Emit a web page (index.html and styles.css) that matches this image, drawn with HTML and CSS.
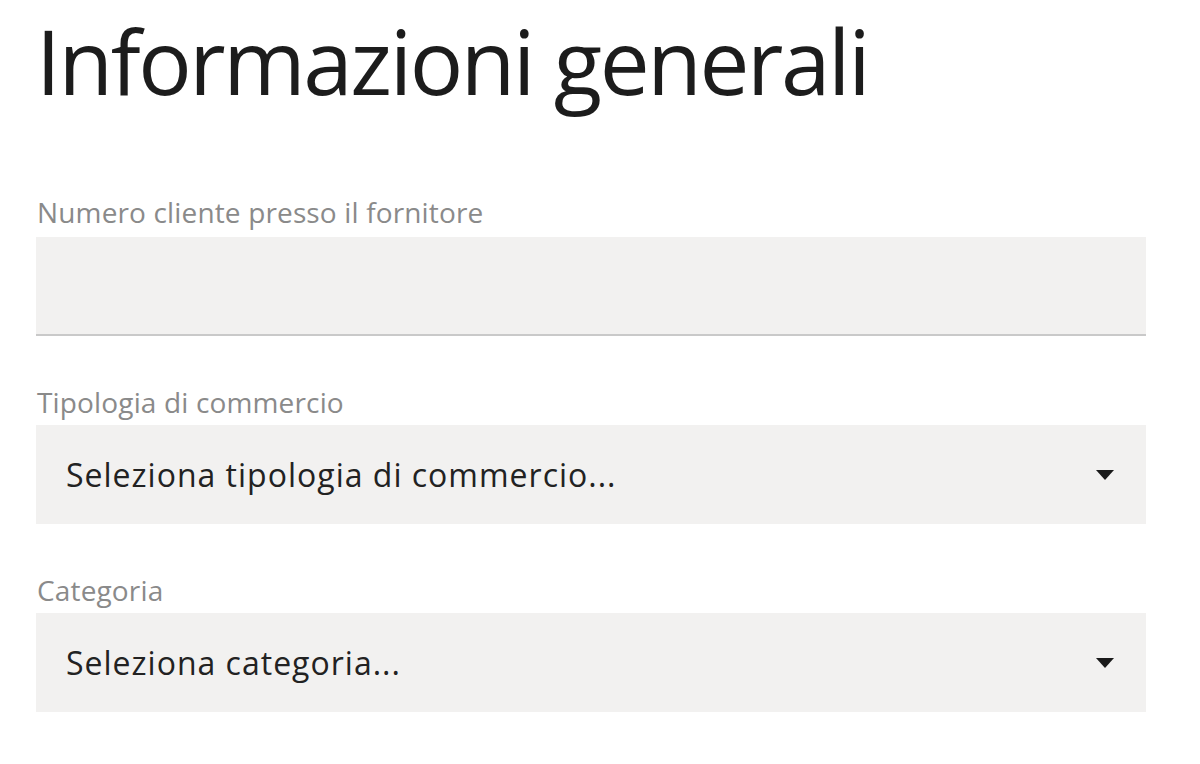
FILE: index.html
```html
<!DOCTYPE html>
<html lang="it">
<head>
<meta charset="utf-8">
<title>Informazioni generali</title>
<link rel="stylesheet" href="styles.css">
</head>
<body>
<main class="page">
  <h1 class="title">Informazioni generali</h1>
  <div class="field field-first">
    <label class="label">Numero cliente presso il fornitore</label>
    <div class="input"></div>
  </div>
  <div class="field field-second">
    <label class="label">Tipologia di commercio</label>
    <div class="select">
      <span class="select-text">Seleziona tipologia di commercio...</span>
      <svg class="caret" width="18" height="10" viewBox="0 0 18 10"><path d="M0 0 H18 L9 10 Z" fill="#1a1a1a"/></svg>
    </div>
  </div>
  <div class="field field-third">
    <label class="label">Categoria</label>
    <div class="select">
      <span class="select-text">Seleziona categoria...</span>
      <svg class="caret" width="18" height="10" viewBox="0 0 18 10"><path d="M0 0 H18 L9 10 Z" fill="#1a1a1a"/></svg>
    </div>
  </div>
</main>
</body>
</html>
```

FILE: styles.css
```css
html, body {
  margin: 0;
  padding: 0;
  background: #ffffff;
}
body {
  font-family: "Open Sans", "Noto Sans", sans-serif;
  color: #1e1e1e;
}
.page {
  padding: 0 54px 0 36px;
}
.title {
  margin: 0;
  padding-top: 6px;
  font-size: 89px;
  font-weight: 400;
  letter-spacing: -2.4px;
  line-height: 110px;
  color: #1c1c1c;
}
.field {
  display: flex;
  flex-direction: column;
}
.field-first {
  margin-top: 78px;
}
.field-second {
  margin-top: 48px;
}
.field-third {
  margin-top: 48px;
}
.label {
  font-size: 28px;
  letter-spacing: 0.15px;
  line-height: 36px;
  color: #8a8a8a;
  padding-left: 1px;
}
.input {
  margin-top: 7px;
  height: 97px;
  background: #f2f1f0;
  border-bottom: 2px solid #c9c9c9;
}
.select {
  margin-top: 5px;
  height: 99px;
  background: #f2f1f0;
  display: flex;
  align-items: center;
  justify-content: space-between;
  padding: 0 32px 0 30px;
}
.select-text {
  font-size: 32px;
  letter-spacing: 1px;
  color: #222222;
}
.caret {
  display: block;
}
```
